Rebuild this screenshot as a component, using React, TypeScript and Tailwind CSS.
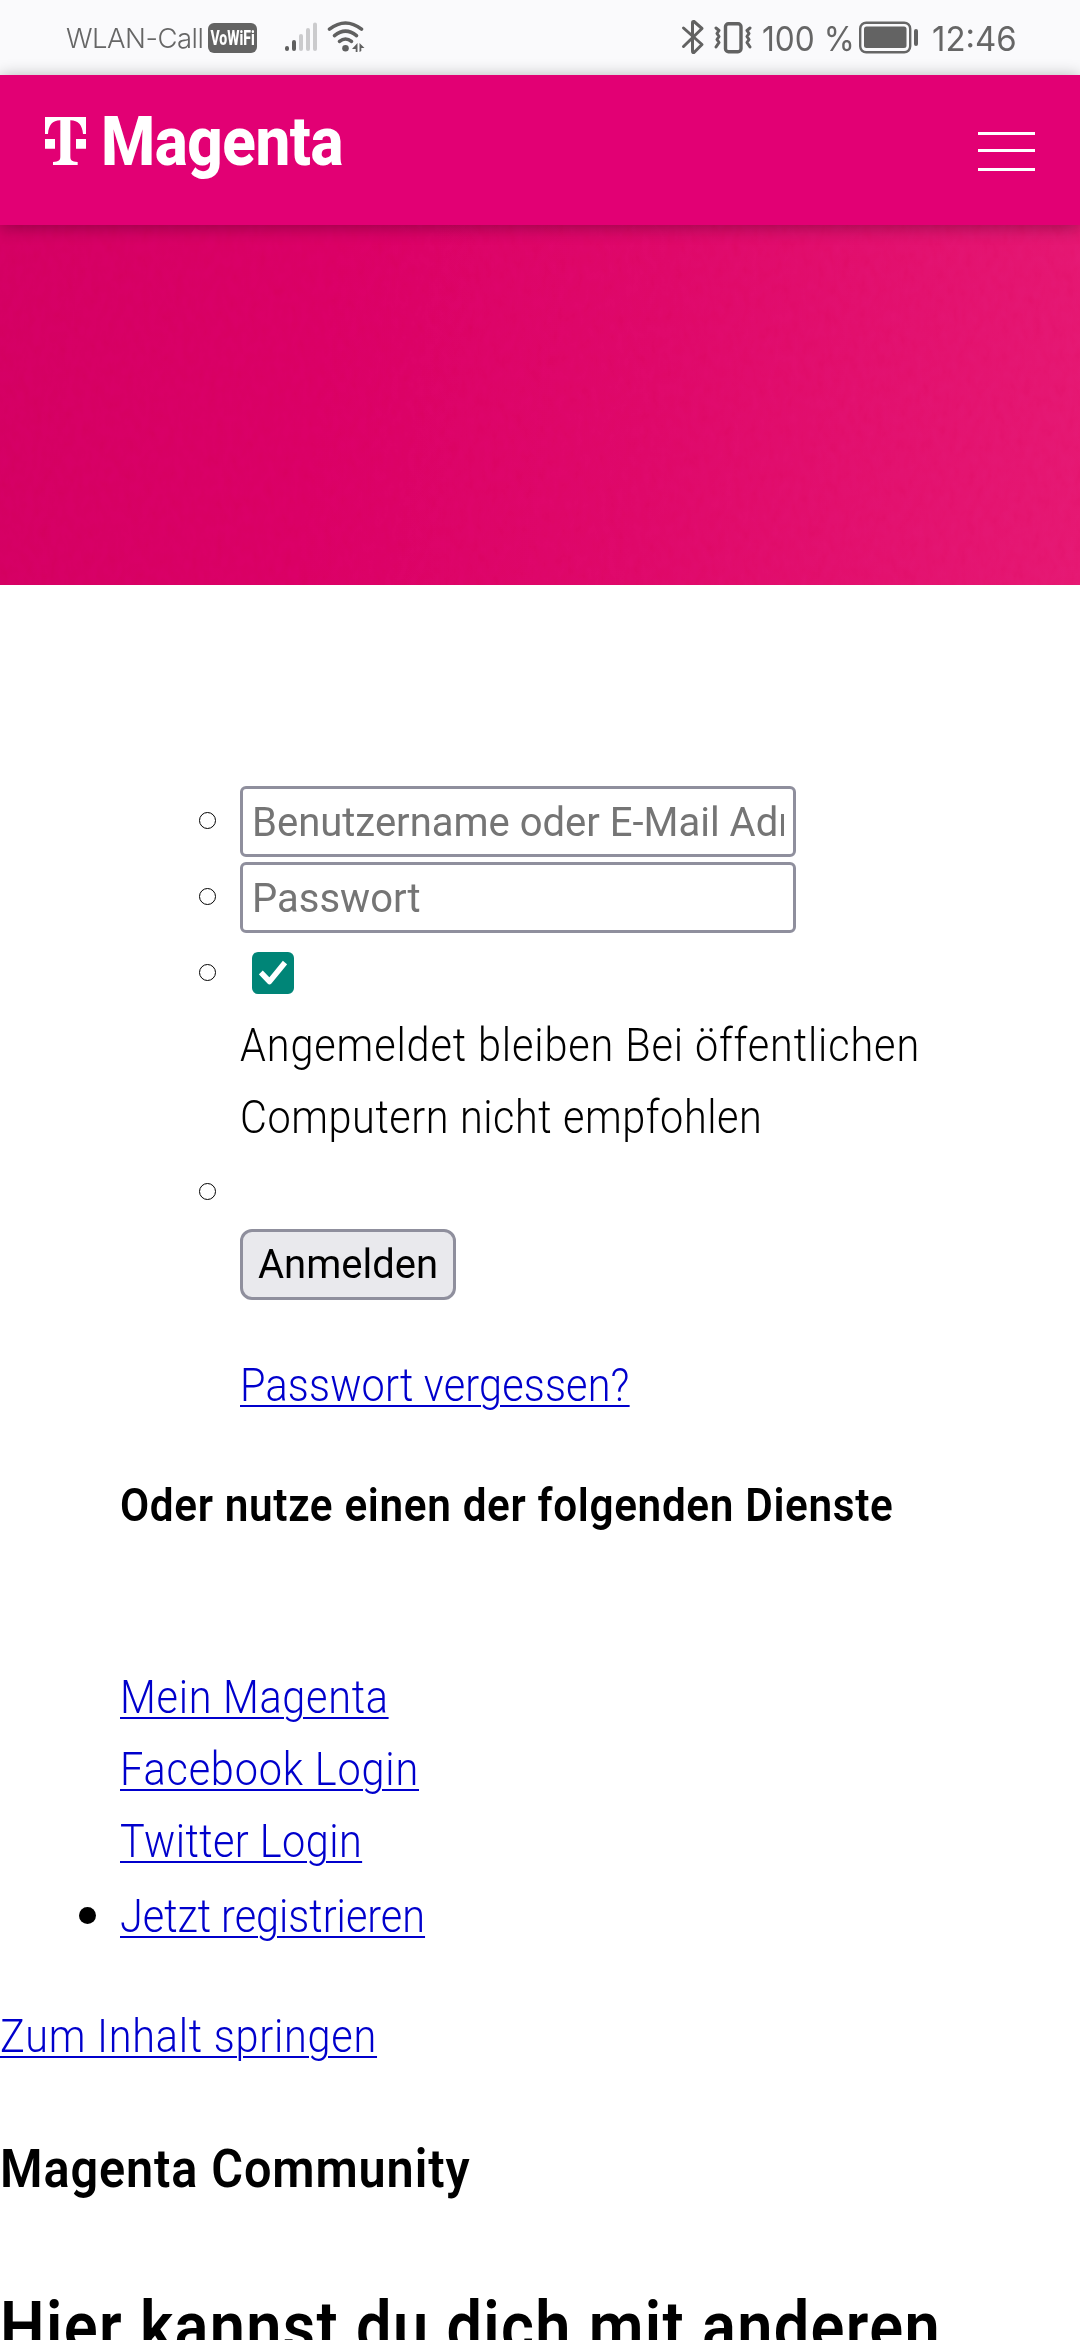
import React from "react";

const bodyText = "block w-max origin-left translate-y-px scale-x-90 whitespace-nowrap font-['Roboto',sans-serif] text-[46px] font-light leading-[72px]";
const linkText = `${bodyText} text-[#0000cc] underline decoration-2 underline-offset-[4px]`;
const field =
  "block h-[71px] w-[556px] rounded-[6px] border-[3px] border-[#8f8f9d] bg-white px-[9px] pt-[2px] font-['Roboto',sans-serif] text-[40px] text-black outline-none placeholder:text-[#757575] placeholder:opacity-100";

function Circle() {
  return <span className="mr-[24px] h-[17px] w-[17px] shrink-0 rounded-full border border-black" />;
}

function TLogo() {
  return (
    <svg viewBox="0 0 123 144" className="h-[48px] w-[41px] shrink-0" fill="#fff">
      <path d="M0 0H123V51H114C112 25 100 10 76 10V118C76 131 80 134 98 135V144H24V135C42 134 46 131 46 118V10C22 10 11 25 9 51H0Z" />
      <path d="M0 66H30V95H0ZM93 66H123V95H93Z" />
    </svg>
  );
}

function Signal() {
  return (
    <svg viewBox="0 0 34 32" className="h-[32px] w-[34px]" strokeWidth="4" strokeLinecap="round">
      <path d="M3 27v1M10 21v7" stroke="#5f5f5f" />
      <path d="M17 15v13M24 9v19M31 3.500v24.500" stroke="#cbcbcd" />
    </svg>
  );
}

function Wifi() {
  return (
    <svg viewBox="0 0 39 33" className="h-[33px] w-[39px]" fill="none" stroke="#606060" strokeWidth="3.600" strokeLinecap="round">
      <path d="M2.500 9.200Q18.500-3.200 34.500 9.200" />
      <path d="M7.500 15.600Q18.500 6.600 29.500 15.600" />
      <path d="M12.500 21.400Q18.500 16.600 24.500 21.400" />
      <circle cx="18.500" cy="28.300" r="3.300" fill="#606060" stroke="none" />
      <path d="M30.500 23v9h-1.800v-3h-3.700zM32.500 23v9l1.800-1v-3h3.200z" fill="#606060" stroke="none" />
    </svg>
  );
}

function Bluetooth() {
  return (
    <svg viewBox="0 0 24 36" className="h-[36px] w-[24px]" fill="none" stroke="#626262" strokeWidth="3" strokeLinecap="round" strokeLinejoin="round">
      <path d="M2.500 9L21 25.500L13 33.500Q11.500 34 11.500 32V4Q11.500 2 13 2.500L21 9.500L2.500 27.500" />
    </svg>
  );
}

function Vibrate() {
  return (
    <svg viewBox="0 0 38 33" className="h-[33px] w-[38px]" fill="none" stroke="#626262" strokeWidth="3" strokeLinecap="round" strokeLinejoin="round">
      <rect x="11.500" y="2.700" width="15.500" height="28" rx="3" strokeWidth="3.400" />
      <path d="M2 7L5 9.500L3 12.500L5 15.500L3 18.500L5 21.500L2 26M36 7L33 9.500L35 12.500L33 15.500L35 18.500L33 21.500L36 26" />
    </svg>
  );
}

function Battery() {
  return (
    <svg viewBox="0 0 60 33" className="h-[33px] w-[60px]">
      <rect x="1.200" y="1.700" width="50" height="29.600" rx="6" fill="none" stroke="#666" strokeWidth="2.400" />
      <rect x="5" y="5.500" width="42.500" height="21.500" rx="2.500" fill="#636363" />
      <rect x="55" y="8" width="4" height="17" rx="2" fill="#626262" />
    </svg>
  );
}

function StatusBar() {
  return (
    <div className="flex h-[75px] justify-between bg-[#fafafc] pl-[66px] font-['Inter',sans-serif] text-[#666]">
      <div className="flex">
        <span className="mt-[18px] h-[40px] w-[142px] whitespace-nowrap text-[27.500px] leading-[40px] tracking-[-0.500px]">
          <span className="font-[340]">WLAN-Call</span>
        </span>
        <span className="mt-[23px] flex h-[30px] w-[49px] items-center justify-center rounded-[6px] bg-[#636363]">
          <span className="scale-x-[0.700] font-['Roboto',sans-serif] text-[20px] font-extrabold leading-[30px] text-white">VoWiFi</span>
        </span>
        <div className="mt-[21px] pl-[27px]"><Signal /></div>
        <div className="mt-[20px] pl-[9px]"><Wifi /></div>
      </div>
      <div className="flex">
        <div className="mt-[19px] w-[33px]"><Bluetooth /></div>
        <div className="mt-[20.500px] w-[48px]"><Vibrate /></div>
        <span className="mt-[18px] block w-[97px] origin-left scale-x-[0.930] whitespace-nowrap text-[34px] leading-[41px]">100 %</span>
        <div className="mt-[21px] w-[73px]"><Battery /></div>
        <span className="mt-[18px] block w-[148px] origin-left scale-x-[0.970] whitespace-nowrap text-[34px] leading-[41px]">12:46</span>
      </div>
    </div>
  );
}

function Header() {
  return (
    <header className="relative z-10 flex h-[150px] items-start justify-between bg-[#e20074] pl-[45px] pr-[45px] shadow-[0_2px_16px_rgba(0,0,0,0.330)]">
      <div className="flex pt-[42px]">
        <TLogo />
        <span className="ml-[15px] mt-[-15px] block origin-left scale-x-[0.910] font-['Roboto',sans-serif] text-[68px] font-extrabold leading-[80px] tracking-[-0.500px] text-white">Magenta</span>
      </div>
      <button className="mt-[57px] h-[39px] w-[57px]" aria-label="Menü">
        <span className="mb-[14px] block h-[3px] bg-white" />
        <span className="mb-[16px] block h-[3px] bg-white" />
        <span className="block h-[3px] bg-white" />
      </button>
    </header>
  );
}

function Hero() {
  return (
    <div className="h-[360px] bg-[linear-gradient(97deg,#d3005f_0%,#da0062_30%,#de0766_60%,#e5156f_100%)]">
      <svg className="block h-full w-full opacity-15 mix-blend-soft-light">
        <filter id="grain">
          <feTurbulence type="fractalNoise" baseFrequency="0.12 0.07" numOctaves="3" seed="4" />
          <feColorMatrix type="saturate" values="0" />
          <feComponentTransfer><feFuncA type="linear" slope="0" intercept="1" /></feComponentTransfer>
        </filter>
        <rect width="100%" height="100%" filter="url(#grain)" />
      </svg>
    </div>
  );
}

export default function App() {
  return (
    <div className="h-[2340px] w-[1080px] overflow-hidden bg-white text-black">
      <StatusBar />
      <Header />
      <Hero />
      <main>
        <ul className="pl-[199px] pt-[201px]">
          <li className="flex h-[76px] items-start">
            <div className="flex h-[69px] items-center"><Circle /></div>
            <input className={field} placeholder="Benutzername oder E-Mail Adresse" />
          </li>
          <li className="flex h-[76px] items-start">
            <div className="flex h-[69px] items-center"><Circle /></div>
            <input className={field} placeholder="Passwort" />
          </li>
          <li className="flex h-[214px] items-start">
            <div className="flex h-[69px] items-center"><Circle /></div>
            <div>
              <div className="h-[70px] pl-[12px] pt-[14px]">
                <span className="flex h-[42px] w-[42px] items-center justify-center rounded-[6px] bg-[#008577]">
                  <svg viewBox="0 0 28 26" className="h-[26px] w-[28px]" fill="none" stroke="#fff" strokeWidth="5.500">
                    <path d="M1.800 12.500L10.500 21.500L26 2.500" strokeLinejoin="round" />
                  </svg>
                </span>
              </div>
              <span className={`${bodyText} tracking-[0.980px]`}>Angemeldet bleiben Bei öffentlichen</span>
              <span className={`${bodyText} tracking-[0.650px]`}>Computern nicht empfohlen</span>
            </div>
          </li>
          <li className="flex h-[196px] items-start">
            <div className="flex h-[79px] items-center"><Circle /></div>
            <div>
              <button className="mt-[77px] block h-[71px] w-[216px] rounded-[12px] border-[3px] border-[#8f8f9d] bg-[#e9e9ed] pt-px font-['Roboto',sans-serif] text-[40px] leading-[64px]">Anmelden</button>
              <a className={`${linkText} mt-[48px] tracking-[0.200px]`}>Passwort vergessen?</a>
            </div>
          </li>
        </ul>
        <div className="pl-[120px] pt-[120px]">
          <strong className="block w-max origin-left translate-y-px scale-x-[0.920] font-['Roboto',sans-serif] text-[46px] font-semibold leading-[72px] tracking-[0.700px]">Oder nutze einen der folgenden Dienste</strong>
          <div className="pt-[120px]">
            <a className={`${linkText} tracking-[0.790px]`}>Mein Magenta</a>
            <a className={`${linkText} tracking-[0.920px]`}>Facebook Login</a>
            <a className={`${linkText} tracking-[0.500px]`}>Twitter Login</a>
          </div>
        </div>
        <div className="flex items-center pl-[79px] pt-[3px]">
          <span className="mr-[24px] mt-px h-[17px] w-[17px] rounded-full bg-black" />
          <a className={linkText}>Jetzt registrieren</a>
        </div>
        <a className={`${linkText} mt-[48px] tracking-[0.850px]`}>Zum Inhalt springen</a>
        <h2 className="mt-[56px] block w-max origin-left scale-x-90 whitespace-nowrap font-['Roboto',sans-serif] text-[54px] font-semibold leading-[84px] tracking-[1px]">Magenta Community</h2>
        <h1 className="mt-[62px] block h-[67px] w-max origin-left scale-x-90 whitespace-nowrap font-['Roboto',sans-serif] text-[70px] font-semibold leading-[108px] tracking-[1.500px]">Hier kannst du dich mit anderen</h1>
      </main>
    </div>
  );
}
